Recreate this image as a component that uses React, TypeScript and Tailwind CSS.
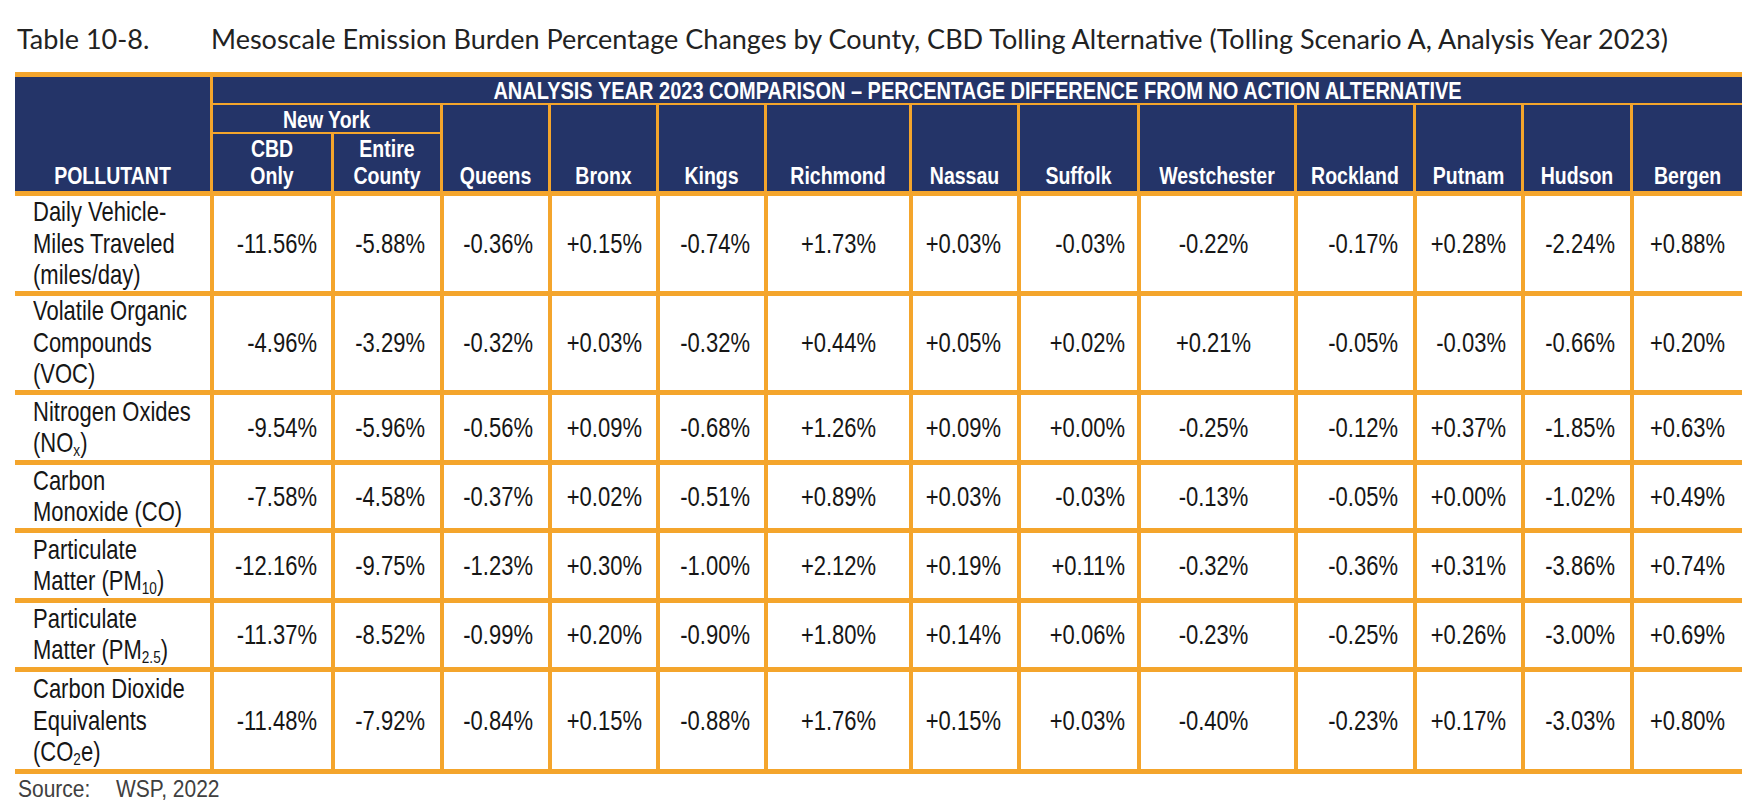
import React from "react";

type Row = {
  label: React.ReactNode;
  values: string[];
  height: string;
};

// the source page is a bit stretched vertically, so text gets a small y-scale
const Txt = ({ children, className = "" }: { children: React.ReactNode; className?: string }) => (
  <span className={`inline-block scale-y-[1.22] ${className}`}>{children}</span>
);

const Sub = ({ children }: { children: React.ReactNode }) => (
  <span className="text-[0.62em] leading-none relative top-[0.2em]">{children}</span>
);

const rows: Row[] = [
  {
    label: (
      <>
        Daily Vehicle-
        <br />
        Miles Traveled
        <br />
        (miles/day)
      </>
    ),
    values: ["-11.56%", "-5.88%", "-0.36%", "+0.15%", "-0.74%", "+1.73%", "+0.03%", "-0.03%", "-0.22%", "-0.17%", "+0.28%", "-2.24%", "+0.88%"],
    height: "h-[100px]",
  },
  {
    label: (
      <>
        Volatile Organic
        <br />
        Compounds
        <br />
        (VOC)
      </>
    ),
    values: ["-4.96%", "-3.29%", "-0.32%", "+0.03%", "-0.32%", "+0.44%", "+0.05%", "+0.02%", "+0.21%", "-0.05%", "-0.03%", "-0.66%", "+0.20%"],
    height: "h-[99px]",
  },
  {
    label: (
      <>
        Nitrogen Oxides
        <br />
        (NO<Sub>x</Sub>)
      </>
    ),
    values: ["-9.54%", "-5.96%", "-0.56%", "+0.09%", "-0.68%", "+1.26%", "+0.09%", "+0.00%", "-0.25%", "-0.12%", "+0.37%", "-1.85%", "+0.63%"],
    height: "h-[70px]",
  },
  {
    label: (
      <>
        Carbon
        <br />
        Monoxide (CO)
      </>
    ),
    values: ["-7.58%", "-4.58%", "-0.37%", "+0.02%", "-0.51%", "+0.89%", "+0.03%", "-0.03%", "-0.13%", "-0.05%", "+0.00%", "-1.02%", "+0.49%"],
    height: "h-[68px]",
  },
  {
    label: (
      <>
        Particulate
        <br />
        Matter (PM<Sub>10</Sub>)
      </>
    ),
    values: ["-12.16%", "-9.75%", "-1.23%", "+0.30%", "-1.00%", "+2.12%", "+0.19%", "+0.11%", "-0.32%", "-0.36%", "+0.31%", "-3.86%", "+0.74%"],
    height: "h-[70px]",
  },
  {
    label: (
      <>
        Particulate
        <br />
        Matter (PM<Sub>2.5</Sub>)
      </>
    ),
    values: ["-11.37%", "-8.52%", "-0.99%", "+0.20%", "-0.90%", "+1.80%", "+0.14%", "+0.06%", "-0.23%", "-0.25%", "+0.26%", "-3.00%", "+0.69%"],
    height: "h-[69px]",
  },
  {
    label: (
      <>
        Carbon Dioxide
        <br />
        Equivalents
        <br />
        (CO<Sub>2</Sub>e)
      </>
    ),
    values: ["-11.48%", "-7.92%", "-0.84%", "+0.15%", "-0.88%", "+1.76%", "+0.15%", "+0.03%", "-0.40%", "-0.23%", "+0.17%", "-3.03%", "+0.80%"],
    height: "h-[102px]",
  },
];

// column widths, pollutant first
const widths = [
  "w-[195px]",
  "w-[121px]",
  "w-[109px]",
  "w-[108px]",
  "w-[108px]",
  "w-[108px]",
  "w-[145px]",
  "w-[108px]",
  "w-[120px]",
  "w-[157px]",
  "w-[119px]",
  "w-[108px]",
  "w-[109px]",
  "w-[112px]",
];

// how each data column sits in its cell
const align = [
  "text-right pr-[14px]",
  "text-right pr-[15px]",
  "text-right pr-[15px]",
  "text-right pr-[14px]",
  "text-right pr-[14px]",
  "text-center",
  "text-right pr-[16px]",
  "text-right pr-[12px]",
  "text-center pr-[8px]",
  "text-right pr-[15px]",
  "text-right pr-[15px]",
  "text-right pr-[15px]",
  "text-right pr-[17px]",
];

const counties = ["Queens", "Bronx", "Kings", "Richmond", "Nassau", "Suffolk", "Westchester", "Rockland", "Putnam", "Hudson", "Bergen"];

const th = "bg-[#243468] text-white font-bold border-[#f4a52c] p-0";

export default function App() {
  return (
    <div className="w-[1760px] h-[811px] bg-white overflow-hidden font-['Liberation_Sans',Arial,sans-serif]">
      <div className="h-[72px] pt-[20px] pl-[17px] font-['Lato','Liberation_Sans',sans-serif] text-[27px] leading-[38px] text-[#222222] whitespace-nowrap">
        <span className="inline-block w-[194px]">Table 10-8.</span>
        Mesoscale Emission Burden Percentage Changes by County, CBD Tolling Alternative (Tolling Scenario A, Analysis Year 2023)
      </div>

      <table className="ml-[15px] w-[1727px] table-fixed border-separate border-spacing-0">
        <colgroup>
          {widths.map((w, i) => (
            <col key={i} className={w} />
          ))}
        </colgroup>
        <thead className="text-[19.5px] leading-[22px]">
          <tr>
            <th rowSpan={3} className={`${th} border-t-[5px] border-b-[5px] align-bottom pb-[2px] text-center`}>
              <Txt className="origin-bottom">POLLUTANT</Txt>
            </th>
            <th colSpan={13} className={`${th} h-[31px] border-t-[5px] border-l-[3px] text-center align-middle text-[20px]`}>
              <Txt>ANALYSIS YEAR 2023 COMPARISON – PERCENTAGE DIFFERENCE FROM NO ACTION ALTERNATIVE</Txt>
            </th>
          </tr>
          <tr>
            <th colSpan={2} className={`${th} h-[29px] border-t-[2px] border-l-[3px] text-center align-middle`}>
              <Txt>New York</Txt>
            </th>
            {counties.map((c) => (
              <th key={c} rowSpan={2} className={`${th} border-t-[2px] border-l-[3px] border-b-[5px] align-bottom pb-[2px] text-center`}>
                <Txt className="origin-bottom">{c}</Txt>
              </th>
            ))}
          </tr>
          <tr>
            <th className={`${th} h-[64px] border-t-[2px] border-l-[3px] border-b-[5px] align-bottom pb-[2px] text-center`}>
              <Txt className="origin-bottom">
                CBD
                <br />
                Only
              </Txt>
            </th>
            <th className={`${th} border-t-[2px] border-l-[3px] border-b-[5px] align-bottom pb-[2px] text-center`}>
              <Txt className="origin-bottom">
                Entire
                <br />
                County
              </Txt>
            </th>
          </tr>
        </thead>
        <tbody className="text-[22px] leading-[26px] text-[#161616]">
          {rows.map((r, ri) => (
            <tr key={ri}>
              <td className={`${r.height} border-b-[5px] border-[#f4a52c] pl-[18px] pr-0 align-middle text-left whitespace-nowrap`}>
                <Txt>{r.label}</Txt>
              </td>
              {r.values.map((v, vi) => (
                <td key={vi} className={`border-b-[5px] border-l-[4px] border-[#f4a52c] align-middle whitespace-nowrap ${align[vi]}`}>
                  <Txt>{v}</Txt>
                </td>
              ))}
            </tr>
          ))}
        </tbody>
      </table>

      <div className="pl-[18px] text-[21px] leading-[30px] text-[#404040]">
        <span className="inline-block scale-y-[1.12]">
          <span className="inline-block w-[98px]">Source:</span>
          WSP, 2022
        </span>
      </div>
    </div>
  );
}
